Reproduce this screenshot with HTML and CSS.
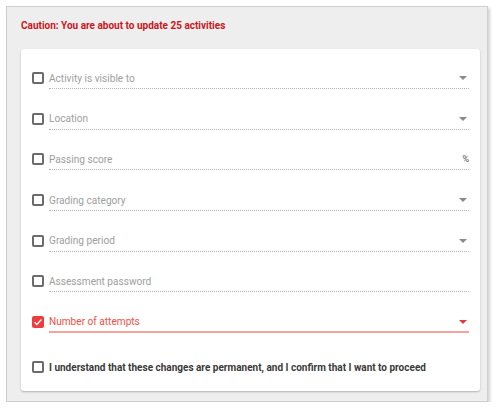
FILE: index.html
```html
<!DOCTYPE html>
<html>
<head>
<meta charset="utf-8">
<link rel="stylesheet" href="styles.css">
</head>
<body>
<div class="panel">
  <div class="caution">Caution: You are about to update 25 activities</div>
  <div class="card">
    <div class="row">
      <span class="cb"></span>
      <div class="field"><span class="ph">Activity is visible to</span><span class="arrow"></span></div>
    </div>
    <div class="row">
      <span class="cb"></span>
      <div class="field"><span class="ph">Location</span><span class="arrow"></span></div>
    </div>
    <div class="row">
      <span class="cb"></span>
      <div class="field"><span class="ph">Passing score</span><span class="pct">%</span></div>
    </div>
    <div class="row">
      <span class="cb"></span>
      <div class="field"><span class="ph">Grading category</span><span class="arrow"></span></div>
    </div>
    <div class="row">
      <span class="cb"></span>
      <div class="field"><span class="ph">Grading period</span><span class="arrow"></span></div>
    </div>
    <div class="row">
      <span class="cb"></span>
      <div class="field"><span class="ph">Assessment password</span></div>
    </div>
    <div class="row">
      <span class="cb checked"><svg width="12" height="12" viewBox="0 0 12 12"><path d="M2.6 6.2 L4.9 8.4 L9.4 3.6" fill="none" stroke="#fff" stroke-width="1.4"/></svg></span>
      <div class="field active"><span class="ph">Number of attempts</span><span class="arrow"></span></div>
    </div>
    <div class="confirm">
      <span class="cb"></span>
      <span class="confirm-text">I understand that these changes are permanent, and I confirm that I want to proceed</span>
    </div>
  </div>
</div>
</body>
</html>
```
FILE: styles.css
```css
html, body {
  margin: 0;
  padding: 0;
  background: #fff;
  font-family: Roboto, "Liberation Sans", Arial, sans-serif;
}
body {
  padding: 6px 0 0 6px;
}
.panel {
  height: 396px;
  box-sizing: border-box;
  width: 482px;
  background: #eeeeee;
  border: 1px solid #cfcfcf;
  box-shadow: 2px 2px 3px rgba(0, 0, 0, 0.18);
  padding: 12px 7px 9px 14px;
  display: flex;
  flex-direction: column;
}
.caution {
  color: #c8161d;
  font-weight: bold;
  font-size: 10px;
  line-height: 13px;
  height: 13px;
}
.card {
  margin-top: 17px;
  background: #fff;
  border-radius: 3px;
  box-shadow: 0 1px 2px rgba(0, 0, 0, 0.25);
  padding: 19px 11px 0 11px;
  height: 342px;
  box-sizing: border-box;
  display: flex;
  flex-direction: column;
  gap: 19.7px;
}
.row {
  display: flex;
  align-items: center;
  gap: 5px;
  height: 21px;
}
.cb {
  width: 12px;
  height: 12px;
  box-sizing: border-box;
  border: 2px solid #6b6b6b;
  border-radius: 2px;
  flex: none;
  margin-bottom: 1px;
}
.cb.checked {
  background: #ef3c3c;
  border: none;
  display: flex;
}
.field {
  flex: 1;
  height: 21px;
  box-sizing: border-box;
  border-bottom: 1px dotted #b5b5b5;
  display: flex;
  align-items: center;
  justify-content: space-between;
}
.field.active {
  border-bottom: 2px solid #f6a3a0;
}
.ph {
  font-size: 10.1px;
  color: #9e9e9e;
}
.field.active .ph {
  color: #f0504a;
}
.arrow {
  width: 0;
  height: 0;
  border-left: 4px solid transparent;
  border-right: 4px solid transparent;
  border-top: 4px solid #8a8a8a;
  margin-right: 2px;
}
.field.active .arrow {
  border-top-color: #e8383a;
}
.pct {
  font-size: 9px;
  color: #555;
  margin-right: 0;
}
.confirm {
  display: flex;
  align-items: center;
  gap: 5px;
  margin-top: 8px;
}
.confirm-text {
  font-size: 10px;
  font-weight: bold;
  color: #3a3a3a;
}
```
